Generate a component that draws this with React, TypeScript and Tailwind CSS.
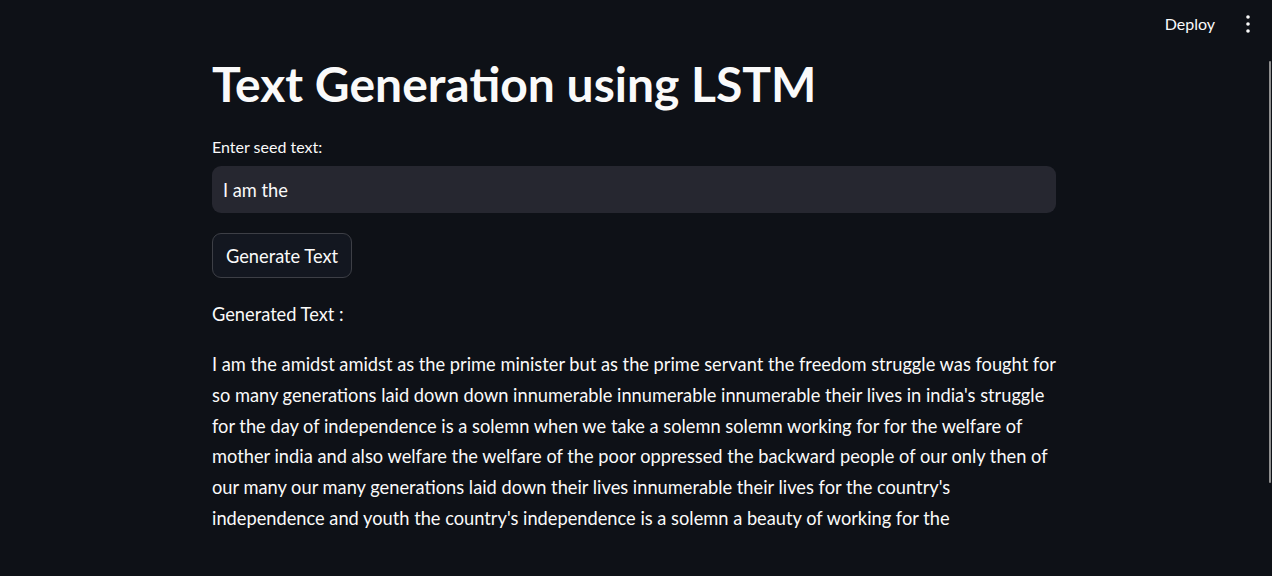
import React from "react";

const lines = [
  "I am the amidst amidst as the prime minister but as the prime servant the freedom struggle was fought for",
  "so many generations laid down down innumerable innumerable innumerable their lives in india's struggle",
  "for the day of independence is a solemn when we take a solemn solemn working for for the welfare of",
  "mother india and also welfare the welfare of the poor oppressed the backward people of our only then of",
  "our many our many generations laid down their lives innumerable their lives for the country's",
  "independence and youth the country's independence is a solemn a beauty of working for the",
];

export default function App() {
  return (
    <div
      className="relative w-[1272px] h-[576px] overflow-hidden bg-[#0e1117] text-[#fafafa]"
      style={{ fontFamily: "Lato, 'Noto Sans', sans-serif" }}
    >
      <header className="flex h-[48px] items-center justify-end pr-[20px]">
        <button className="text-[16px] leading-[20px] text-[#fafafa] mr-[29px]">Deploy</button>
        <svg width="8" height="22" viewBox="0 0 8 22" className="text-[#fafafa]">
          <circle cx="4" cy="4" r="1.8" fill="currentColor" />
          <circle cx="4" cy="11" r="1.8" fill="currentColor" />
          <circle cx="4" cy="18" r="1.8" fill="currentColor" />
        </svg>
      </header>

      <main className="mx-auto w-[844px] mr-[216px]">
        <h1 className="mt-[7px] text-[48px] font-bold leading-[57.6px] tracking-[0px]">
          Text Generation using LSTM
        </h1>

        <label className="mt-[24px] block text-[16px] leading-[20px]">Enter seed text:</label>
        <div className="mt-[9px] flex h-[47px] items-center rounded-[9px] bg-[#262730] px-[11px] pt-[2px]">
          <span className="text-[18.25px] leading-[22px]">I am the</span>
        </div>

        <button className="mt-[20px] flex h-[45px] w-[140px] items-center justify-center rounded-[9px] border border-[#3d3f46] bg-[#131720] pt-[2px] text-[18.25px] leading-[22px]">
          Generate Text
        </button>

        <p className="mt-[21px] text-[18.25px] leading-[30.72px]">Generated Text :</p>

        <div className="mt-[20px] text-[18.25px] leading-[30.72px]">
          {lines.map((l, i) => (
            <div key={i} className="whitespace-nowrap">
              {l}
            </div>
          ))}
        </div>
      </main>

      <div className="absolute right-[1px] top-[61px] h-[422px] w-[2px] rounded-full bg-[#8e8e8e]" />
    </div>
  );
}
